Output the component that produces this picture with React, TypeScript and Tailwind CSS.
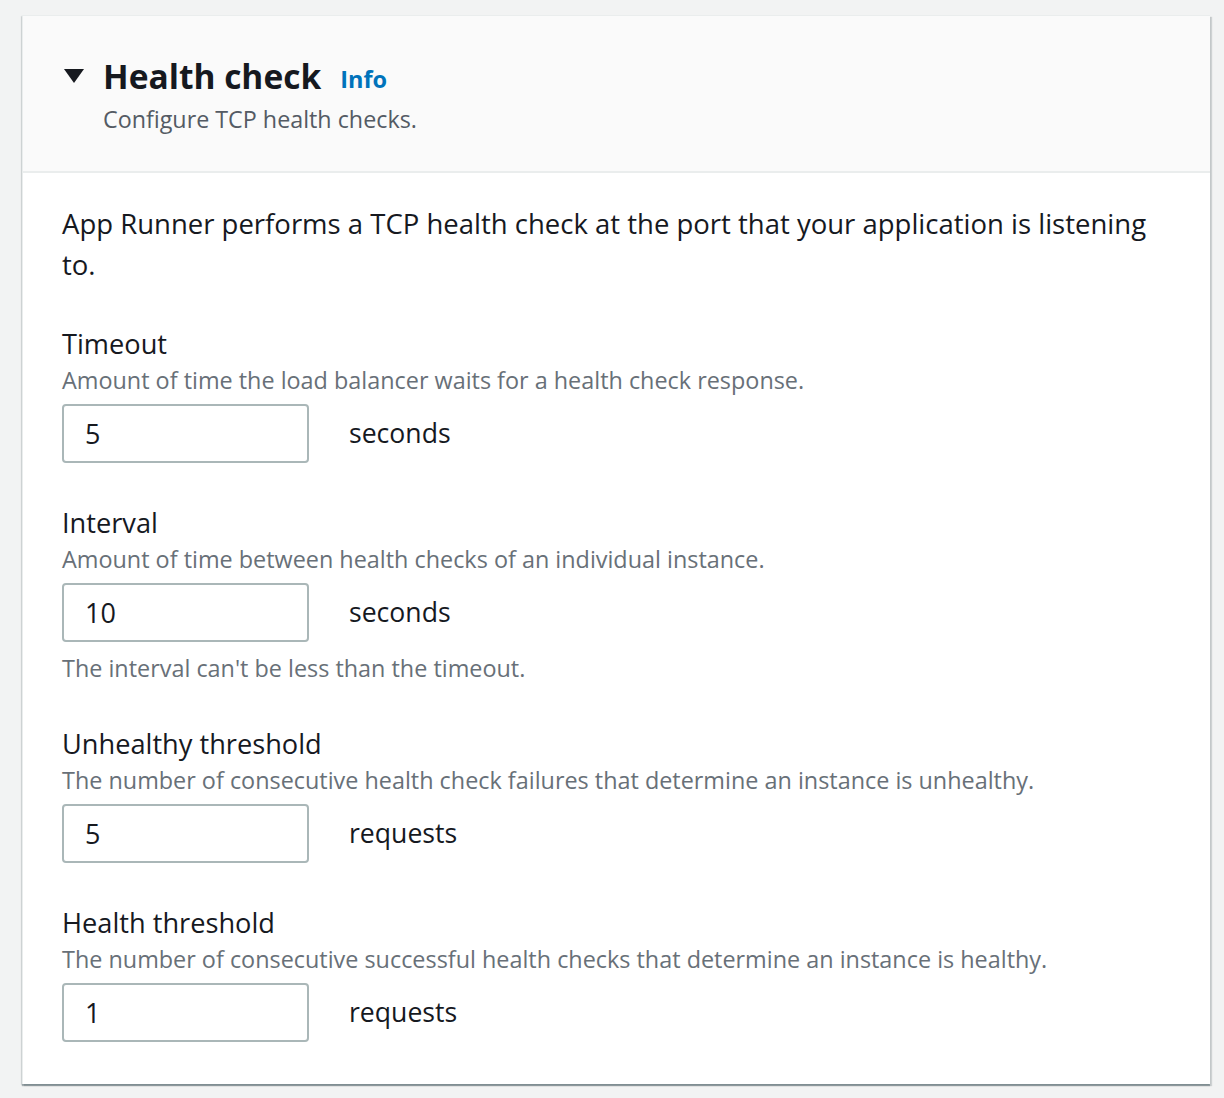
const fields = [
  {
    label: 'Timeout',
    description: 'Amount of time the load balancer waits for a health check response.',
    value: '5',
    unit: 'seconds',
  },
  {
    label: 'Interval',
    description: 'Amount of time between health checks of an individual instance.',
    value: '10',
    unit: 'seconds',
    constraint: "The interval can't be less than the timeout.",
  },
  {
    label: 'Unhealthy threshold',
    description: 'The number of consecutive health check failures that determine an instance is unhealthy.',
    value: '5',
    unit: 'requests',
  },
  {
    label: 'Health threshold',
    description: 'The number of consecutive successful health checks that determine an instance is healthy.',
    value: '1',
    unit: 'requests',
  },
];

export default function App() {
  return (
    <div
      className="min-h-screen bg-[#f2f3f3] pt-[15px] pb-[14px]"
      style={{ fontFamily: "'Open Sans', 'Noto Sans', sans-serif" }}
    >
      <section className="ml-[22px] w-[1188px] bg-white border-t border-l border-[#eaeded] shadow-[0_2px_1px_0_rgba(0,28,36,0.3),2px_2px_1px_0_rgba(0,28,36,0.15),-1px_1px_1px_0_rgba(0,28,36,0.1)]">
        {/* Header */}
        <div className="bg-[#fafafa] border-b-2 border-[#eaeded] pl-[41px] pt-[38px] pb-[36px]">
          <div className="flex items-center h-[44px]">
            <svg width="20" height="16" viewBox="0 0 20 16" className="mr-[19px]">
              <polygon points="0,1 20,1 10,15" fill="#16191f" />
            </svg>
            <h2 className="text-[33.5px] leading-[44px] font-bold text-[#16191f]">Health check</h2>
            <span className="ml-[19px] mt-[6px] text-[23.5px] leading-[32px] font-bold text-[#0073bb]">Info</span>
          </div>
          <p className="mt-[5px] pl-[39px] text-[23.3px] leading-[32px] text-[#545b64]">
            Configure TCP health checks.
          </p>
        </div>

        {/* Body */}
        <div className="px-[39px] pt-[30px] pb-[42px]">
          <p className="text-[27.5px] leading-[41px] text-[#16191f]">
            App Runner performs a TCP health check at the port that your application is listening to.
          </p>

          <div className="mt-[39px] flex flex-col gap-[40px]">
            {fields.map((f) => (
              <div key={f.label}>
                <div className="text-[27.2px] leading-[40px] text-[#16191f]">{f.label}</div>
                <div className="text-[23.4px] leading-[32px] text-[#687078]">{f.description}</div>
                <div className="mt-[8px] flex items-center">
                  <input
                    readOnly
                    value={f.value}
                    className="w-[247px] h-[59px] border-2 border-[#aab7b8] rounded-[4px] pl-[21px] text-[27px] text-[#16191f] bg-white outline-none"
                  />
                  <span className="ml-[40px] text-[26.6px] text-[#16191f]">{f.unit}</span>
                </div>
                {f.constraint && (
                  <div className="mt-[10px] text-[23.4px] leading-[32px] text-[#687078]">{f.constraint}</div>
                )}
              </div>
            ))}
          </div>
        </div>
      </section>
    </div>
  );
}
